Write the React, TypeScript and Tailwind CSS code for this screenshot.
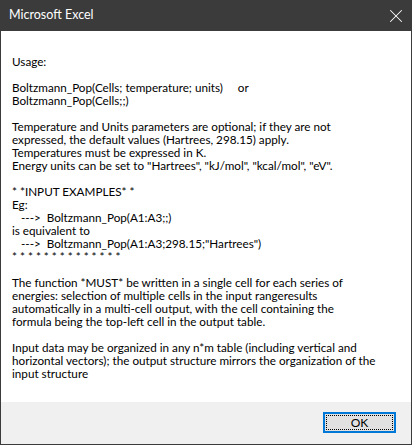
import { X } from "lucide-react";

const lines = [
  "Usage:",
  "",
  "Boltzmann_Pop(Cells; temperature; units)     or",
  "Boltzmann_Pop(Cells;;)",
  "",
  "Temperature and Units parameters are optional; if they are not",
  "expressed, the default values (Hartrees, 298.15) apply.",
  "Temperatures must be expressed in K.",
  'Energy units can be set to "Hartrees", "kJ/mol", "kcal/mol", "eV".',
  "",
  "* *INPUT EXAMPLES* *",
  "Eg:",
  "   --->  Boltzmann_Pop(A1:A3;;)",
  "is equivalent to",
  '   --->  Boltzmann_Pop(A1:A3;298.15;"Hartrees")',
  "* * * * * * * * * * * * * *",
  "",
  "The function *MUST* be written in a single cell for each series of",
  "energies: selection of multiple cells in the input rangeresults",
  "automatically in a multi-cell output, with the cell containing the",
  "formula being the top-left cell in the output table.",
  "",
  "Input data may be organized in any n*m table (including vertical and",
  "horizontal vectors); the output structure mirrors the organization of the",
  "input structure",
];

export default function App() {
  return (
    <div className="w-[412px] h-[445px] flex flex-col bg-[#3b3b3b] font-['Lato',sans-serif] text-[11.7px]">
      <div className="h-[31px] flex items-center justify-between pl-[9px] pr-[5px] text-white">
        <span className="text-[12.5px]">Microsoft Excel</span>
        <X size={22} strokeWidth={1.1} className="text-white" />
      </div>
      <div className="flex-1 flex flex-col mx-px mb-px">
        <div className="flex-1 bg-white pl-[11px] pt-[24px] text-black">
          {lines.map((l, i) => (
            <div key={i} className="h-[13px] leading-[13px] whitespace-pre">
              {l}
            </div>
          ))}
        </div>
        <div className="h-[42px] bg-[#f0f0f0] flex justify-end items-start pt-[10px] pr-[15px]">
          <button className="w-[73px] h-[21px] border-2 border-[#0078d7] bg-[#e1e1e1] p-px flex">
            <span className="flex-1 flex items-center justify-center border border-dotted border-black text-black text-[12px] leading-none">
              OK
            </span>
          </button>
        </div>
      </div>
    </div>
  );
}
